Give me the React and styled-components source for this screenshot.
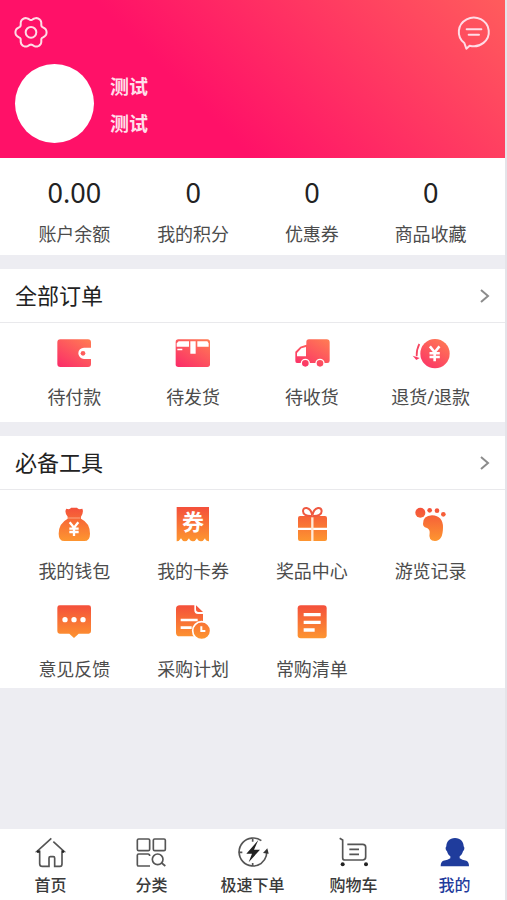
import React from "react";
import styled, { createGlobalStyle, css } from "styled-components";

const GlobalStyle = createGlobalStyle`
  *, *::before, *::after { box-sizing: border-box; }
  body {
    margin: 0;
    background: #ededf2;
    font-family: "Noto Sans", "Noto Sans CJK SC", sans-serif;
    color: #222;
  }
  a { color: inherit; text-decoration: none; }
  h2 { margin: 0; font: inherit; }
`;

const Page = styled.div`
  display: flex;
  flex-direction: column;
  min-height: 100vh;
  border-right: 2px solid #e4e4e9;
`;

const Content = styled.main`
  flex: 1;
  display: flex;
  flex-direction: column;
  gap: 14px;
`;

const Header = styled.header`
  padding: 16px 15px 15px;
  background: linear-gradient(45deg, #ff1168 38%, #ff5c5c 100%);
  color: #fff;
`;

const HeaderBar = styled.div`
  display: flex;
  justify-content: space-between;
`;

const IconButton = styled.button`
  width: 32px;
  height: 32px;
  padding: 0;
  border: 0;
  background: none;
  color: #ffdce6;
  cursor: pointer;
`;

const Profile = styled.div`
  display: flex;
  align-items: center;
  gap: 16px;
  margin-top: 16px;
`;

const Avatar = styled.div`
  width: 79px;
  height: 79px;
  border-radius: 50%;
  background: #fff;
`;

const ProfileText = styled.div`
  padding-top: 5px;
  font-size: 19px;
  font-weight: 700;
  line-height: 37px;
  color: #ffdfe9;
`;

const Panel = styled.section`
  background: #fff;
`;

const Grid = styled.div`
  display: grid;
  grid-template-columns: repeat(4, 1fr);
  row-gap: 21px;
  padding: ${(p) => p.$padding};
`;

const Cell = styled.a`
  display: flex;
  flex-direction: column;
  align-items: center;
  gap: ${(p) => p.$gap}px;
`;

const Amount = styled.span`
  font-size: 27px;
  line-height: 32px;
`;

const Label = styled.span`
  font-size: 18px;
  line-height: 24px;
  white-space: nowrap;
  color: #4c4c4c;
`;

const PanelHead = styled.a`
  display: flex;
  align-items: center;
  justify-content: space-between;
  height: 54px;
  padding: 0 15px;
  border-bottom: 1px solid #e9e9ec;
  font-size: 22px;
  line-height: 32px;
`;

const PanelTitle = styled.h2`
  padding-bottom: 2px;
`;

const Drawing = styled.svg`
  display: block;
  overflow: visible;
  width: ${(p) => p.$w}px;
  height: ${(p) => p.$h}px;
`;

const Glyph = styled.text`
  font-family: "Noto Sans CJK SC", sans-serif;
  font-weight: 700;
  font-size: 66px;
  text-anchor: middle;
  fill: #fff;
`;

const TabBar = styled.nav`
  display: grid;
  grid-template-columns: repeat(5, 1fr);
  padding: 8px 0 5px;
  background: #fff;
`;

const Tab = styled.a`
  display: flex;
  flex-direction: column;
  align-items: center;
  gap: 6px;
  font-size: 16px;
  font-weight: 500;
  line-height: 20px;
  white-space: nowrap;
  color: #3a3a3a;
  ${(p) => p.$active && css`color: #1f3c9c;`}
`;

const gearPoints = Array.from({ length: 120 }, (_, i) => {
  const t = (i / 120) * Math.PI * 2;
  const r = 42.5 + 5 * Math.cos(6 * t) - 0.8 * Math.cos(12 * t);
  return `${(93 + r * Math.cos(t)).toFixed(1)},${(97 + r * Math.sin(t)).toFixed(1)}`;
}).join(" ");

const Gear = () => (
  <Drawing $w={32} $h={32} viewBox="45 48 96 96" fill="none" stroke="currentColor" strokeWidth="6">
    <polygon points={gearPoints} />
    <circle cx="93" cy="97" r="16" />
  </Drawing>
);

const Chat = () => (
  <Drawing $w={32} $h={32} viewBox="234 51 96 96" fill="none" stroke="currentColor" strokeWidth="6" strokeLinecap="round" strokeLinejoin="round">
    <path d="M253 132 A45 43 0 1 1 269 140 L259 149 Z" />
    <path d="M260 91H304M266 107H297" />
  </Drawing>
);

const Chevron = () => (
  <Drawing $w={10} $h={16} viewBox="0 0 10 16" fill="none" stroke="#8c8c8c" strokeWidth="2">
    <path d="M1 2L8 8L1 14" />
  </Drawing>
);

function ColorIcon({ id, x, y, from, to, diagonal, children }) {
  return (
    <Drawing $w={36} $h={36} viewBox={`${x} ${y} 108 108`} fill={`url(#${id})`} aria-hidden="true">
      <defs>
        <linearGradient
          id={id}
          gradientUnits="userSpaceOnUse"
          x1={x + (diagonal ? 25 : 54)}
          y1={y + 102}
          x2={x + (diagonal ? 85 : 54)}
          y2={y + 6}
        >
          <stop offset="0" stopColor={from} />
          <stop offset="1" stopColor={to} />
        </linearGradient>
      </defs>
      {children}
    </Drawing>
  );
}

const red = { from: "#fb2f68", to: "#ff7a54", diagonal: true };
const orange = { from: "#fd9430", to: "#f4513b" };

const yen = "M-13 -20L0 -4L13 -20M0 -4V21M-14 -1H14M-14 9H14";

const Wallet = () => (
  <ColorIcon id="wallet" x={168} y={30} {...red}>
    <path d="M181 43H264Q273 43 273 52V68H252A17 17 0 0 0 252 102H273V117Q273 126 264 126H181Q172 126 172 117V52Q172 43 181 43Z" />
    <circle cx="249" cy="85" r="7" />
  </ColorIcon>
);

const Parcel = () => (
  <ColorIcon id="parcel" x={525} y={30} {...red}>
    <rect x="527" y="43" width="103" height="83" rx="8" />
    <path fill="#fff" d="M536 49H567V65H530V55ZM592 49H622L626 55V65H592ZM571 49H587V86H571ZM532 71H547V76H532Z" />
  </ColorIcon>
);

const Truck = () => (
  <ColorIcon id="truck" x={118} y={30} {...red}>
    <path d="M163 43H216Q225 43 225 52V107Q225 114 218 114H127Q122 114 122 108V80L137 65L155 59V51Q155 43 163 43Z" />
    <path fill="#fff" d="M127 84L140 70L154 66V94H127Z" />
    <g stroke="#fff" strokeWidth="4">
      <circle cx="152" cy="115" r="12" />
      <circle cx="196" cy="115" r="12" />
    </g>
  </ColorIcon>
);

const Refund = () => (
  <ColorIcon id="refund" x={475} y={30} {...red}>
    <circle cx="541" cy="86" r="44" />
    <path transform="translate(540 86) scale(1.1)" d={yen} fill="none" stroke="#fff" strokeWidth="7" />
    <path d="M494 57Q485 74 486 94" fill="none" stroke="#f6445f" strokeWidth="5" />
    <path d="M474 92L495 99L485 105Z" />
  </ColorIcon>
);

const MoneyBag = () => (
  <ColorIcon id="bag" x={168} y={228} {...orange}>
    <path d="M199 236Q210 240 213 233H231Q235 240 247 236Q252 246 243 260V266Q270 279 270 311Q270 333 253 333H193Q176 333 176 311Q176 280 203 266V260Q192 246 199 236Z" />
    <path d="M204 264H241" stroke="#ffc9a8" strokeWidth="2" />
    <path transform="translate(222 297)" d={yen} fill="none" stroke="#fff" strokeWidth="7" />
  </ColorIcon>
);

const Voucher = () => (
  <ColorIcon id="voucher" x={525} y={228} {...orange}>
    <path d="M530 231H627V334Q617 334 615 325Q610 334 603 334Q594 334 591 325Q586 334 579 334Q570 334 567 325Q562 334 555 334Q547 334 543 325Q538 334 530 334Z" />
    <Glyph x="579" y="299">券</Glyph>
  </ColorIcon>
);

const Gift = () => (
  <ColorIcon id="gift" x={118} y={228} {...orange}>
    <path d="M136 258H211Q217 258 217 264V293H130V264Q130 258 136 258ZM130 300H217V327Q217 333 211 333H136Q130 333 130 327Z" />
    <path d="M173 262V333" stroke="#ffe9d8" strokeWidth="7" />
    <path d="M172 258Q145 259 145 243Q146 233 156 234Q169 236 173 257Q177 236 190 234Q200 233 201 243Q201 259 174 258" fill="none" stroke="#ef5840" strokeWidth="6" />
  </ColorIcon>
);

const Foot = () => (
  <ColorIcon id="foot" x={475} y={228} {...orange}>
    <circle cx="497" cy="248" r="15" />
    <circle cx="525" cy="241" r="7" />
    <circle cx="547" cy="242" r="7" />
    <circle cx="566" cy="253" r="7" />
    <path d="M505 281Q505 257 532 256Q565 258 565 292Q565 333 541 333Q520 332 525 308Q526 297 515 293Q505 290 505 281Z" />
  </ColorIcon>
);

const Feedback = () => (
  <ColorIcon id="feedback" x={168} y={42} {...orange}>
    <path d="M179 46H266Q273 46 273 53V124Q273 131 266 131H236L222 144L208 131H179Q172 131 172 124V53Q172 46 179 46Z" />
    <g fill="#fff">
      <circle cx="195" cy="89" r="8" />
      <circle cx="222" cy="89" r="8" />
      <circle cx="249" cy="89" r="8" />
    </g>
  </ColorIcon>
);

const Plan = () => (
  <ColorIcon id="plan" x={525} y={42} {...orange}>
    <path d="M539 46H583V61Q583 72 594 72H609V139H539Q528 139 528 128V57Q528 46 539 46ZM588 46L609 66H596Q588 66 588 58Z" />
    <path d="M542 90H593M542 113H575" stroke="#fff" strokeWidth="8" />
    <circle cx="605" cy="122" r="27" stroke="#fff" strokeWidth="5" />
    <path d="M604 109V123H616" fill="none" stroke="#fff" strokeWidth="6" />
  </ColorIcon>
);

const List = () => (
  <ColorIcon id="list" x={118} y={42} {...orange}>
    <rect x="129" y="46" width="87" height="99" rx="9" />
    <path d="M147 74H198M147 97H198M147 120H180" stroke="#fff" strokeWidth="10" />
  </ColorIcon>
);

const LineIcon = ({ x, children }) => (
  <Drawing $w={36} $h={32} viewBox={`${x} 51 108 96`} fill="none" stroke="#555" strokeWidth="5" aria-hidden="true">
    {children}
  </Drawing>
);

const HomeIcon = () => (
  <LineIcon x={97}>
    <path d="M152 55L109 94H117V131Q117 139 125 139H145V114Q145 110 149 110H158Q162 110 162 114V139H178Q184 139 184 131V94H190L158 65" />
    <path d="M109 95H117M184 95H190" stroke="#222" strokeWidth="7" />
  </LineIcon>
);

const CategoryIcon = () => (
  <LineIcon x={401}>
    <rect x="411" y="57" width="37" height="35" rx="4" />
    <rect x="459" y="57" width="36" height="35" rx="4" />
    <path d="M448 108Q448 102 443 102H415Q411 102 411 106V134Q411 138 415 138H449" />
    <circle cx="472" cy="118" r="16" />
    <path d="M484 129L495 138" />
  </LineIcon>
);

const BoltIcon = () => (
  <LineIcon x={704}>
    <path d="M783 62A42 42 0 1 0 783 130M799 92A42 42 0 0 1 771 136" />
    <path d="M757 56V65M715 97H726M757 138V129" />
    <path d="M788 99L801 85L805 101Z" fill="#333" stroke="none" />
    <path d="M774 60L738 101H755L745 127L779 89H761Z" fill="#222" stroke="none" />
  </LineIcon>
);

const CartIcon = () => (
  <LineIcon x={246}>
    <path d="M257 55L266 60V113Q266 120 273 120H326Q335 120 335 111V81Q335 73 326 73H280M286 73H320M286 88H315M286 103H315" />
    <circle cx="266" cy="133" r="6" fill="#222" stroke="none" />
    <circle cx="336" cy="133" r="6" fill="#222" stroke="none" />
  </LineIcon>
);

const UserIcon = () => (
  <LineIcon x={549}>
    <path
      fill="#1f3c9c"
      stroke="none"
      d="M603 54C620 54 629 66 629 79C633 84 631 91 627 94C625 102 621 106 617 109V115Q624 120 637 122Q645 125 645 139H560Q560 125 568 122Q582 120 589 115V109C585 106 581 102 579 94C575 91 573 84 577 79C577 66 586 54 603 54Z"
    />
  </LineIcon>
);

const stats = [
  ["0.00", "账户余额"],
  ["0", "我的积分"],
  ["0", "优惠券"],
  ["0", "商品收藏"],
];

const orders = [
  [Wallet, "待付款"],
  [Parcel, "待发货"],
  [Truck, "待收货"],
  [Refund, "退货/退款"],
];

const tools = [
  [MoneyBag, "我的钱包"],
  [Voucher, "我的卡券"],
  [Gift, "奖品中心"],
  [Foot, "游览记录"],
  [Feedback, "意见反馈"],
  [Plan, "采购计划"],
  [List, "常购清单"],
];

const tabs = [
  [HomeIcon, "首页"],
  [CategoryIcon, "分类"],
  [BoltIcon, "极速下单"],
  [CartIcon, "购物车"],
  [UserIcon, "我的"],
];

function IconPanel({ title, items, padding, gap }) {
  return (
    <Panel>
      <PanelHead href="#">
        <PanelTitle>{title}</PanelTitle>
        <Chevron />
      </PanelHead>
      <Grid $padding={padding}>
        {items.map(([Icon, label]) => (
          <Cell key={label} href="#" $gap={gap}>
            <Icon />
            <Label>{label}</Label>
          </Cell>
        ))}
      </Grid>
    </Panel>
  );
}

export default function App() {
  return (
    <Page>
      <GlobalStyle />
      <Header>
        <HeaderBar>
          <IconButton type="button" aria-label="设置"><Gear /></IconButton>
          <IconButton type="button" aria-label="消息"><Chat /></IconButton>
        </HeaderBar>
        <Profile>
          <Avatar />
          <ProfileText>
            <div>测试</div>
            <div>测试</div>
          </ProfileText>
        </Profile>
      </Header>
      <Content>
        <Panel>
          <Grid $padding="19px 15px 9px">
            {stats.map(([amount, label]) => (
              <Cell key={label} href="#" $gap={13}>
                <Amount>{amount}</Amount>
                <Label>{label}</Label>
              </Cell>
            ))}
          </Grid>
        </Panel>
        <IconPanel title="全部订单" items={orders} padding="12px 15px 13px" gap={14} />
        <IconPanel title="必备工具" items={tools} padding="16px 15px 7px" gap={17} />
      </Content>
      <TabBar>
        {tabs.map(([Icon, label]) => (
          <Tab key={label} href="#" $active={label === "我的"}>
            <Icon />
            {label}
          </Tab>
        ))}
      </TabBar>
    </Page>
  );
}
